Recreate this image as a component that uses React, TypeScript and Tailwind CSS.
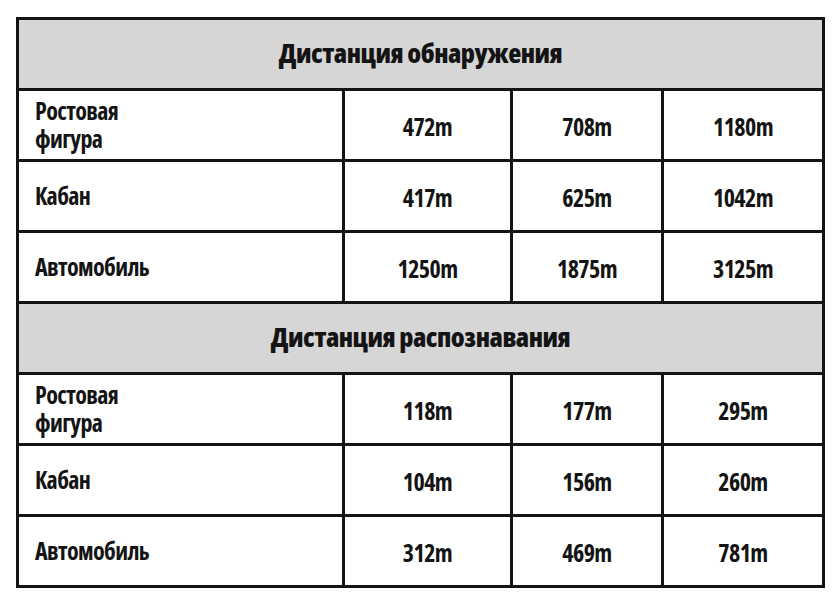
import React from "react";

type Row = { label: string[]; values: string[] };

const sections: { title: string; rows: Row[] }[] = [
  {
    title: "Дистанция обнаружения",
    rows: [
      { label: ["Ростовая", "фигура"], values: ["472m", "708m", "1180m"] },
      { label: ["Кабан"], values: ["417m", "625m", "1042m"] },
      { label: ["Автомобиль"], values: ["1250m", "1875m", "3125m"] },
    ],
  },
  {
    title: "Дистанция распознавания",
    rows: [
      { label: ["Ростовая", "фигура"], values: ["118m", "177m", "295m"] },
      { label: ["Кабан"], values: ["104m", "156m", "260m"] },
      { label: ["Автомобиль"], values: ["312m", "469m", "781m"] },
    ],
  },
];

export default function App() {
  return (
    <div className="w-[837px] h-[601px] bg-white pl-[16px] pt-[17px] font-['Open_Sans',sans-serif] [font-stretch:75%] font-bold text-[#141414]">
      <table className="table-fixed border-collapse border-[3px] border-[#141414] w-[806px]">
        <colgroup>
          <col className="w-[326px]" />
          <col className="w-[168px]" />
          <col className="w-[151px]" />
          <col className="w-[161px]" />
        </colgroup>
        <tbody>
          {sections.map((s) => (
            <React.Fragment key={s.title}>
              <tr className="h-[71px]">
                <td
                  colSpan={4}
                  className="border-[3px] border-[#141414] bg-[#d6d6d6] text-center text-[27px] font-extrabold leading-none p-0 pb-[3px] tracking-[-0.5px]"
                >
                  {s.title}
                </td>
              </tr>
              {s.rows.map((r) => (
                <tr key={r.label.join(" ")} className="h-[71px]">
                  <td className="border-[3px] border-[#141414] pl-[16px] py-0 text-[24px] leading-[28px] tracking-[-0.6px]">
                    {r.label.length > 1 ? (
                      <>
                        {r.label[0]}
                        <br />
                        {r.label[1]}
                      </>
                    ) : (
                      r.label[0]
                    )}
                  </td>
                  {r.values.map((v, i) => (
                    <td
                      key={i}
                      className="border-[3px] border-[#141414] text-center p-0 pt-[3px] text-[24px] leading-none tracking-[-0.6px]"
                    >
                      {v}
                    </td>
                  ))}
                </tr>
              ))}
            </React.Fragment>
          ))}
        </tbody>
      </table>
    </div>
  );
}
